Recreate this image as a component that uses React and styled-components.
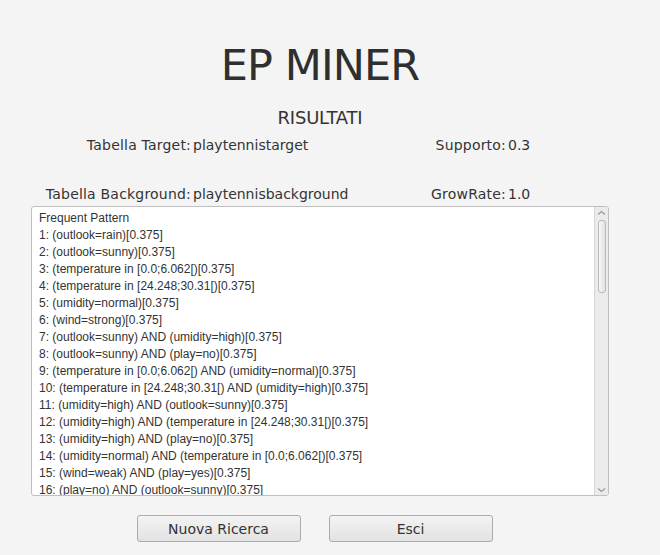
import React from "react";
import styled, { createGlobalStyle } from "styled-components";

const GlobalStyle = createGlobalStyle`
  html, body {
    margin: 0;
    padding: 0;
    background: #f4f4f4;
  }
`;

const Page = styled.div`
  width: 660px;
  height: 555px;
  background: #f4f4f4;
  display: flex;
  flex-direction: column;
  align-items: stretch;
  padding: 40px 20px 0 0;
  box-sizing: border-box;
  font-family: "DejaVu Sans", Verdana, sans-serif;
  color: #333333;
  overflow: hidden;
`;

const Title = styled.h1`
  margin: 0;
  font-weight: 400;
  font-size: 43px;
  line-height: 51px;
  letter-spacing: -0.9px;
  text-align: center;
  color: #2f2f2f;
`;

const Subtitle = styled.h2`
  margin: 16px 0 0 0;
  font-weight: 400;
  font-size: 18px;
  line-height: 22px;
  letter-spacing: -0.2px;
  text-align: center;
  color: #333;
`;

const InfoGrid = styled.div`
  display: grid;
  grid-template-columns: 191px 206px 109px 40px;
  row-gap: 31px;
  margin-top: 7px;
  font-size: 14px;
  line-height: 18px;
`;

const Label = styled.span`
  text-align: ${(p) => (p.right ? "right" : "left")};
  padding-left: ${(p) => (p.right ? "0" : "2px")};
  letter-spacing: ${(p) => (p.right ? "0.2px" : "0")};
  white-space: nowrap;
`;

const ResultBox = styled.div`
  margin: 3px 0 0 31px;
  width: 578px;
  height: 290px;
  box-sizing: border-box;
  background: #ffffff;
  border: 1px solid #bfbfbf;
  border-radius: 3px;
  display: flex;
  overflow: hidden;
`;

const ResultText = styled.div`
  flex: 1;
  padding: 3px 7px;
  overflow: hidden;
  font-family: "Liberation Sans", Arial, sans-serif;
  font-size: 12px;
  line-height: 17px;
  color: #333;
`;

const Line = styled.div`
  white-space: nowrap;
`;

const ScrollTrack = styled.div`
  width: 13px;
  background: #ebebeb;
  border-left: 1px solid #d6d6d6;
  display: flex;
  flex-direction: column;
  align-items: center;
`;

const Arrow = styled.div`
  height: 11px;
  display: flex;
  align-items: center;
  justify-content: center;
  margin-top: ${(p) => (p.down ? "auto" : "0")};
`;

const Thumb = styled.div`
  width: 8px;
  height: 73px;
  margin-top: 2px;
  box-sizing: border-box;
  border: 1px solid #b9b9b9;
  border-radius: 3px;
  background: linear-gradient(to right, #f6f6f6, #e2e2e2);
`;

const ButtonRow = styled.div`
  display: flex;
  justify-content: center;
  gap: 28px;
  margin-top: 19px;
  padding-right: 11px;
`;

const Button = styled.button`
  width: 164px;
  height: 27px;
  box-sizing: border-box;
  border: 1px solid #acacac;
  border-radius: 3px;
  background: linear-gradient(to bottom, #f3f3f3, #e2e2e2);
  font-family: "DejaVu Sans", Verdana, sans-serif;
  font-size: 14px;
  color: #333;
  padding: 0;
  cursor: pointer;
`;

const Chevron = ({ down }) => (
  <svg width="9" height="6" viewBox="0 0 9 6">
    <path
      d={down ? "M1 1.5 L4.5 4.5 L8 1.5" : "M1 4.5 L4.5 1.5 L8 4.5"}
      fill="none"
      stroke="#9a9a9a"
      strokeWidth="1.2"
    />
  </svg>
);

const patterns = [
  "Frequent Pattern",
  "1: (outlook=rain)[0.375]",
  "2: (outlook=sunny)[0.375]",
  "3: (temperature in [0.0;6.062[)[0.375]",
  "4: (temperature in [24.248;30.31[)[0.375]",
  "5: (umidity=normal)[0.375]",
  "6: (wind=strong)[0.375]",
  "7: (outlook=sunny) AND (umidity=high)[0.375]",
  "8: (outlook=sunny) AND (play=no)[0.375]",
  "9: (temperature in [0.0;6.062[) AND (umidity=normal)[0.375]",
  "10: (temperature in [24.248;30.31[) AND (umidity=high)[0.375]",
  "11: (umidity=high) AND (outlook=sunny)[0.375]",
  "12: (umidity=high) AND (temperature in [24.248;30.31[)[0.375]",
  "13: (umidity=high) AND (play=no)[0.375]",
  "14: (umidity=normal) AND (temperature in [0.0;6.062[)[0.375]",
  "15: (wind=weak) AND (play=yes)[0.375]",
  "16: (play=no) AND (outlook=sunny)[0.375]",
];

export default function App() {
  return (
    <>
      <GlobalStyle />
      <Page>
        <Title>EP MINER</Title>
        <Subtitle>RISULTATI</Subtitle>
        <InfoGrid>
          <Label right>Tabella Target:</Label>
          <Label>playtennistarget</Label>
          <Label right>Supporto:</Label>
          <Label>0.3</Label>
          <Label right>Tabella Background:</Label>
          <Label>playtennisbackground</Label>
          <Label right>GrowRate:</Label>
          <Label>1.0</Label>
        </InfoGrid>
        <ResultBox>
          <ResultText>
            {patterns.map((p) => (
              <Line key={p}>{p}</Line>
            ))}
          </ResultText>
          <ScrollTrack>
            <Arrow>
              <Chevron />
            </Arrow>
            <Thumb />
            <Arrow down>
              <Chevron down />
            </Arrow>
          </ScrollTrack>
        </ResultBox>
        <ButtonRow>
          <Button>Nuova Ricerca</Button>
          <Button>Esci</Button>
        </ButtonRow>
      </Page>
    </>
  );
}
